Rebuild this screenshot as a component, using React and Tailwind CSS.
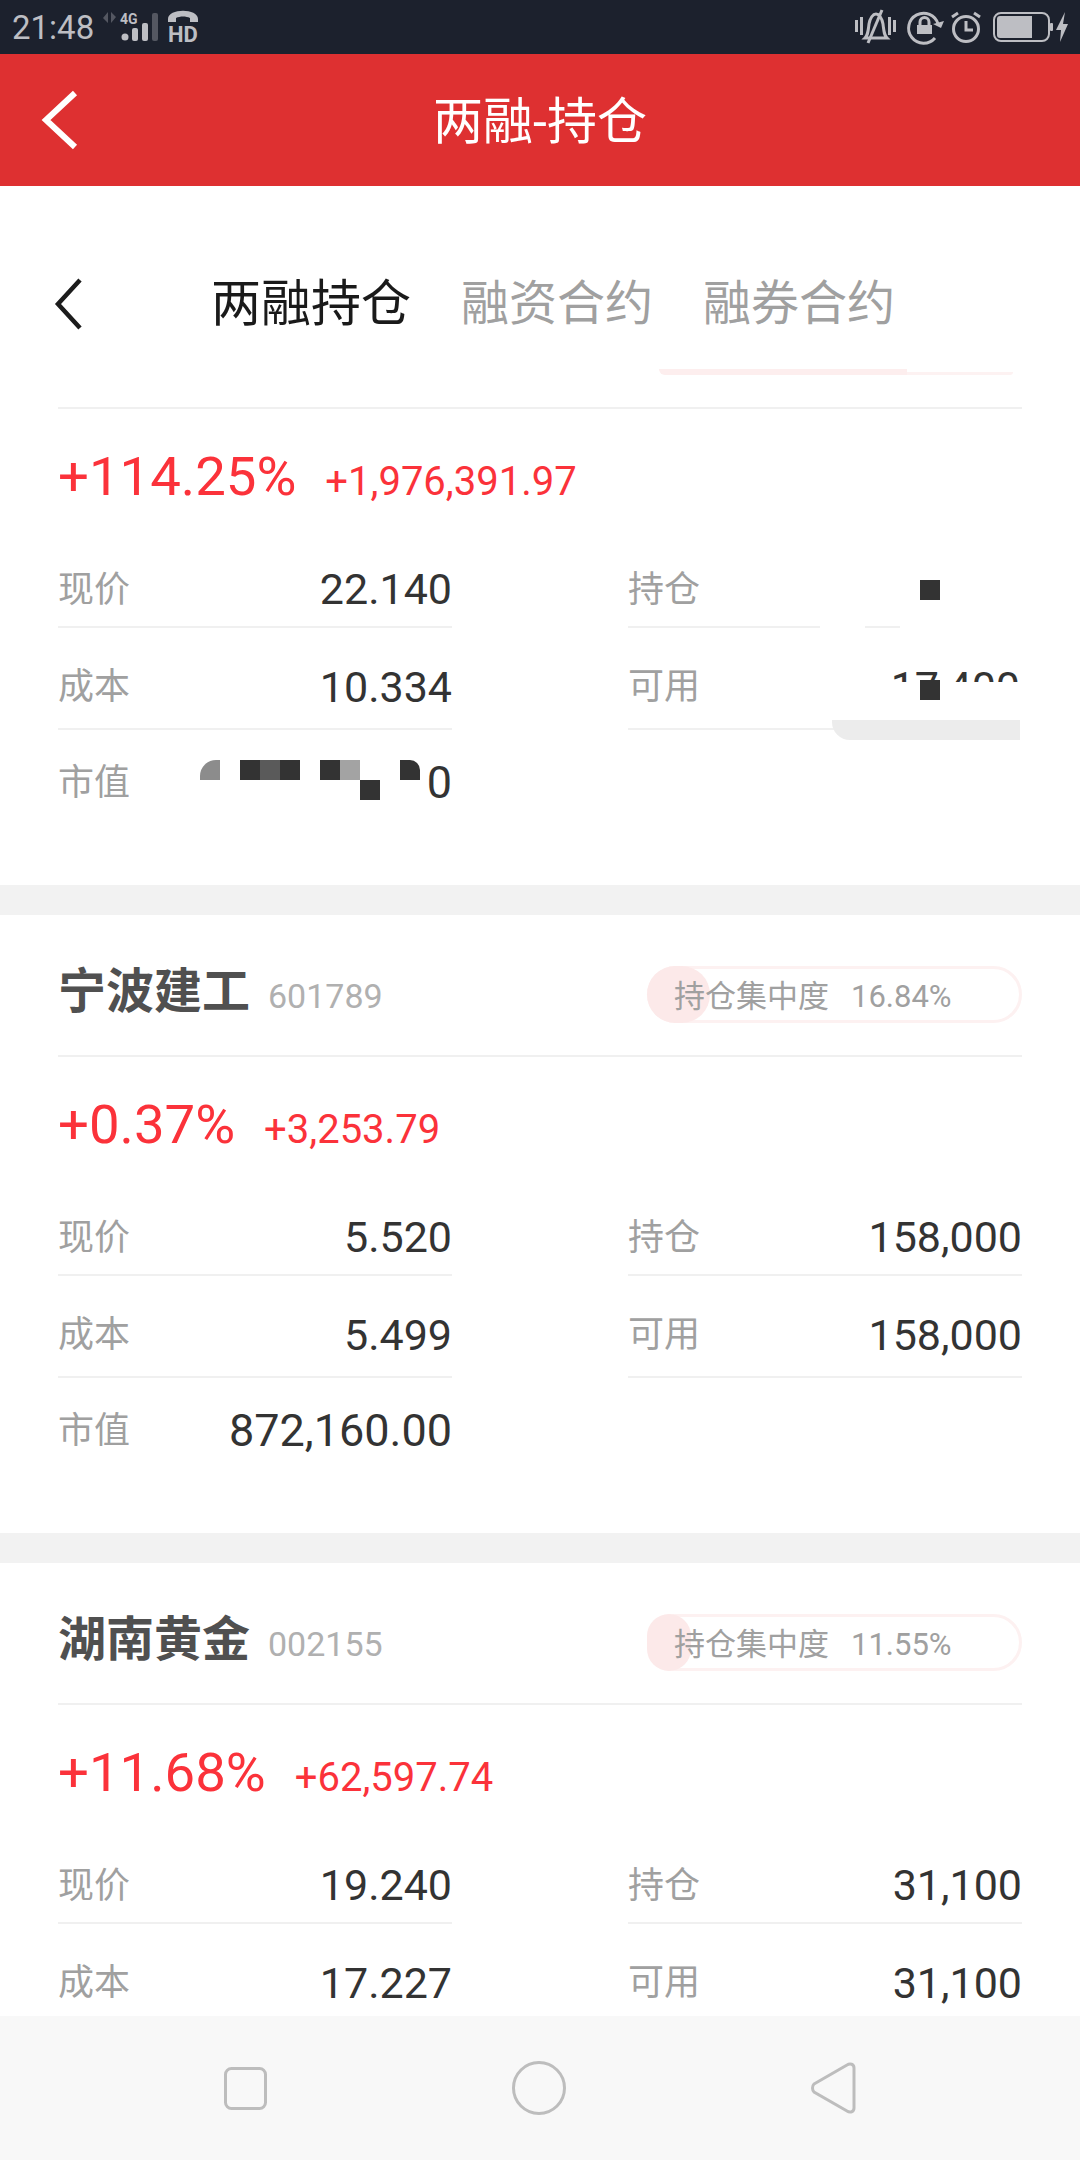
const holdings = [
  {
    name: "宁波建工",
    code: "601789",
    share: "16.84%",
    knob: "w-[63px]",
    pct: "+0.37%",
    profit: "+3,253.79",
    rows: [
      ["现价", "5.520", "持仓", "158,000"],
      ["成本", "5.499", "可用", "158,000"],
      ["市值", "872,160.00"],
    ],
  },
  {
    name: "湖南黄金",
    code: "002155",
    share: "11.55%",
    knob: "w-[44px]",
    pct: "+11.68%",
    profit: "+62,597.74",
    rows: [
      ["现价", "19.240", "持仓", "31,100"],
      ["成本", "17.227", "可用", "31,100"],
    ],
  },
];

// the three rows of a card are not the same height in the app
const rowStyles = [
  "h-[78px] pt-[3px] border-b-2 border-[#f0f0f0]",
  "h-[102px] pt-[18px] border-b-2 border-[#f0f0f0]",
  "h-[106px]",
];

const Cell = ({ label, value, row }) => (
  <div className={`w-[394px] flex items-center justify-between ${rowStyles[row]}`}>
    <span className="text-[36px] text-[#a0a0a0]">{label}</span>
    <span className={`text-[#333333] ${row === 2 ? "text-[45px]" : "text-[43px]"}`}>{value}</span>
  </div>
);

const Gains = ({ pct, profit }) => (
  <div className="h-[141px] pt-[40px] flex items-baseline gap-[29px] leading-none text-[#fb323a]">
    <span className="text-[54.5px]">{pct}</span>
    <span className="text-[40px]">{profit}</span>
  </div>
);

const StockCard = ({ item }) => (
  <div className="bg-white px-[58px] h-[618px] mb-[30px]">
    <div className="h-[142px] pt-[18px] flex items-center justify-between border-b-2 border-[#f0f0f0]">
      <div className="flex items-baseline gap-[18px] mb-[4px]">
        <span className="text-[48px] font-bold text-[#505050]">{item.name}</span>
        <span className="text-[34px] text-[#b0b0b0]">{item.code}</span>
      </div>
      <div className="relative w-[375px] h-[57px] pt-[6px] rounded-full border-[3px] border-[#fdf1f1] flex items-center pl-[24px]">
        <div className={`absolute left-[-3px] top-[-3px] h-[57px] rounded-full bg-[#fce9e9] ${item.knob}`}></div>
        <span className="relative text-[31px] text-[#a0a0a0]">持仓集中度</span>
        <span className="relative text-[31px] text-[#a0a0a0] ml-[22px]">{item.share}</span>
      </div>
    </div>
    <Gains pct={item.pct} profit={item.profit} />
    {item.rows.map((row, i) => (
      <div key={i} className="flex justify-between">
        <Cell label={row[0]} value={row[1]} row={i} />
        {row[2] ? <Cell label={row[2]} value={row[3]} row={i} /> : null}
      </div>
    ))}
  </div>
);

const StatusBar = () => (
  <div className="h-[54px] bg-[#1c212d] flex items-center justify-between pl-3 pr-[10px] text-[#bdbec3]">
    <div className="flex items-center">
      <span className="w-[88px] text-[33px] leading-none">21:48</span>
      <svg width="100" height="54" viewBox="100 0 100 54" fill="currentColor">
        <path d="M108 12v11l-5-5zM111 12l5 5-5 6z" opacity="0.35" />
        <text x="120" y="24" fontSize="14" fontWeight="700" fontFamily="Roboto">4G</text>
        <circle cx="125" cy="37" r="3.5" />
        <rect x="132" y="28" width="6" height="13" rx="2" />
        <rect x="142" y="23" width="6" height="18" rx="2" />
        <rect x="152" y="13" width="6" height="28" rx="2" opacity="0.35" />
        <path d="M168 22v-3c0-11 30-11 30 0v3h-8v-4c-4-2-10-2-14 0v4z" />
        <text x="168" y="42" fontSize="22" fontWeight="700" fontFamily="Roboto">HD</text>
      </svg>
    </div>
    <svg width="220" height="54" viewBox="850 0 220 54" fill="none" stroke="currentColor" strokeWidth="3">
      <path d="M856.500 20v12M861.500 17v18M889.500 17v18M894.500 20v12" />
      <path d="M865 38c3-3 3-6 4-14 1-6 4-10 7-10s6 4 7 10c1 8 1 11 4 14z" />
      <path d="M882 10l-14 33" />
      <path d="M938 24a15 15 0 1 0-3 14" />
      <path d="M933 24l8 4 3-7z" fill="currentColor" stroke="none" />
      <rect x="917" y="25" width="15" height="9" fill="currentColor" stroke="none" />
      <path d="M920 25v-3a4.500 4.500 0 0 1 9 0v3" />
      <circle cx="966" cy="29" r="12.500" />
      <path d="M966 21v9h7M952 17l6-4M980 17l-6-4" />
      <rect x="994" y="13" width="55" height="28" rx="7" strokeWidth="2" />
      <path d="M1000 16h32v22h-32a3 3 0 0 1-3-3v-16a3 3 0 0 1 3-3z" fill="currentColor" stroke="none" />
      <rect x="1050" y="23" width="3" height="8" rx="1" fill="currentColor" stroke="none" />
      <path d="M1065 12l-9 18h5l-1 12 8-18h-5z" fill="currentColor" stroke="none" />
    </svg>
  </div>
);

export default function App() {
  return (
    <div className="relative w-[1080px] h-[2160px] overflow-hidden bg-white font-['Roboto','Noto_Sans_CJK_SC',sans-serif]">
      <StatusBar />
      <div className="relative h-[132px] pt-1 bg-[#de3031] flex items-center justify-center">
        <svg className="absolute left-[40px] top-[34px]" width="40" height="64" viewBox="0 0 40 64" fill="none" stroke="white" strokeWidth="6">
          <path d="M35 5L6 32l29 27" />
        </svg>
        <span className="text-[50px] text-white">两融-持仓</span>
      </div>

      <div className="relative h-[186px] pt-[50px] pl-[211px] flex items-center gap-[50px] text-[48px] text-[#a0a0a0]">
        <svg className="absolute left-[52px] top-[89px]" width="34" height="58" viewBox="0 0 34 58" fill="none" stroke="#1c1c1c" strokeWidth="4.5">
          <path d="M28 5L6 29l22 24" />
        </svg>
        <span className="text-[50px] text-[#1a1a1a]">两融持仓</span>
        <span>融资合约</span>
        <span>融券合约</span>
      </div>

      {/* first card is scrolled under the tabs, part of it is painted out */}
      <div className="relative h-[513px] px-[58px]">
        <div className="absolute left-[659px] top-[-3px] w-[248px] h-[6px] rounded-bl-[12px] bg-[#fdeeee]"></div>
        <div className="absolute left-[907px] top-0 w-[106px] h-[3px] rounded-br-[12px] bg-[#fdf2f2]"></div>
        <div className="h-[37px] border-b-2 border-[#f0f0f0]"></div>
        <Gains pct="+114.25%" profit="+1,976,391.97" />
        <div className="flex justify-between">
          <Cell label="现价" value="22.140" row={0} />
          <Cell label="持仓" value="" row={0} />
        </div>
        <div className="flex justify-between">
          <Cell label="成本" value="10.334" row={1} />
          <Cell label="可用" value="" row={1} />
        </div>
        <Cell label="市值" value="0" row={2} />

        <div className="absolute left-[820px] top-[253px] w-[45px] h-1 bg-white"></div>
        <div className="absolute left-[900px] top-[253px] w-[123px] h-1 bg-white"></div>
        <div className="absolute left-[920px] top-[208px] w-5 h-5 bg-[#333333]"></div>
        <div className="absolute left-[890px] top-[300px] w-[130px] h-[10px] overflow-hidden text-right text-[43px] leading-[30px] text-[#333333] whitespace-nowrap">17,400</div>
        <div className="absolute left-[920px] top-[308px] w-5 h-5 bg-[#333333]"></div>
        <div className="absolute left-[832px] top-[348px] w-[188px] h-5 rounded-bl-[18px] bg-[#ececec]"></div>
        <div className="absolute left-[1020px] top-[355px] w-[3px] h-1 bg-white"></div>

        <div className="absolute left-[200px] top-[388px] w-5 h-5 rounded-tl-[16px] bg-[#8c8c8c]"></div>
        <div className="absolute left-[240px] top-[388px] w-5 h-5 bg-[#333333]"></div>
        <div className="absolute left-[260px] top-[388px] w-5 h-5 bg-[#5a5a5a]"></div>
        <div className="absolute left-[280px] top-[388px] w-5 h-5 bg-[#333333]"></div>
        <div className="absolute left-[320px] top-[388px] w-5 h-5 bg-[#333333]"></div>
        <div className="absolute left-[340px] top-[388px] w-5 h-5 bg-[#a3a3a3]"></div>
        <div className="absolute left-[360px] top-[408px] w-5 h-5 bg-[#333333]"></div>
        <div className="absolute left-[400px] top-[388px] w-5 h-5 rounded-tr-[10px] bg-[#333333]"></div>
      </div>

      <div className="bg-[#f2f2f2] pt-[30px]">
        {holdings.map((item) => (
          <StockCard key={item.code} item={item} />
        ))}
      </div>

      {/* android nav bar */}
      <div className="absolute left-0 bottom-0 w-full h-[144px] bg-[#f8f8f8] flex items-center justify-between px-[224px]">
        <svg width="43" height="43" viewBox="0 0 43 43" fill="none" stroke="#bdbdbd" strokeWidth="3">
          <rect x="1.500" y="1.500" width="40" height="40" rx="6" />
        </svg>
        <svg width="54" height="54" viewBox="0 0 54 54" fill="none" stroke="#bdbdbd" strokeWidth="3">
          <circle cx="27" cy="27" r="25.500" />
        </svg>
        <svg width="45" height="52" viewBox="0 0 45 52" fill="none" stroke="#bdbdbd" strokeWidth="3">
          <path d="M3 22L36 3c3-2 7-1 7 3v40c0 4-4 5-7 3L3 30c-2-2-2-6 0-8z" />
        </svg>
      </div>
    </div>
  );
}
